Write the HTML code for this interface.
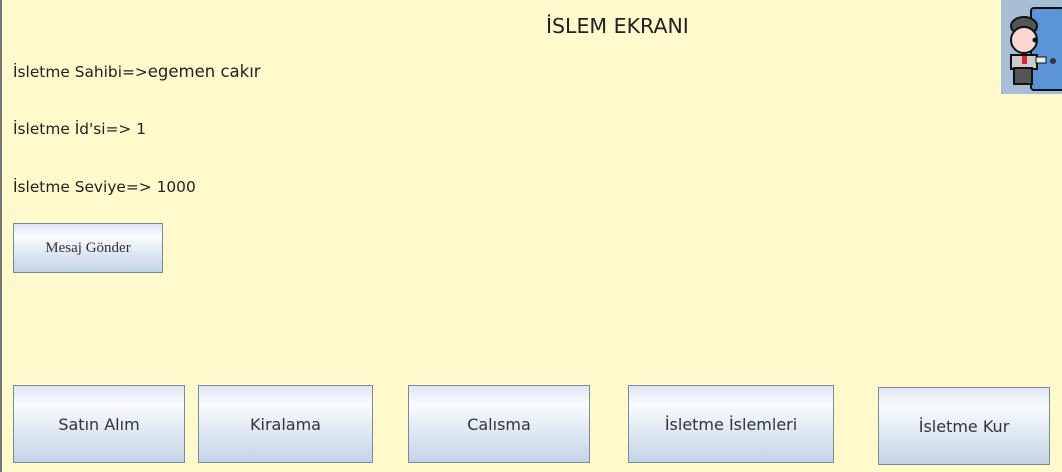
<!DOCTYPE html>
<html><head><meta charset="utf-8"><style>
body{margin:0;width:1062px;height:472px;background:#fff9cc;position:relative;overflow:hidden;font-family:"DejaVu Sans","Liberation Sans",sans-serif;color:#222}
.l{position:absolute;border-left:2px solid #777;left:0;top:0;height:472px}
.t{position:absolute;font-size:15.4px;left:13px}
.b{position:absolute;border:1px solid #7a8a99;background:linear-gradient(#dfe6f1 0%,#f9fbff 25%,#dfe8f3 60%,#c4d4e8 100%);display:flex;align-items:center;justify-content:center;font-size:16px;color:#333;box-sizing:border-box}
</style></head><body>
<div class="l"></div>
<div style="position:absolute;left:546px;top:14px;font-size:20.5px">İSLEM EKRANI</div>
<div class="t" style="top:62px">İsletme Sahibi=&gt;<span style="font-size:16.5px">egemen cakır</span></div>
<div class="t" style="top:120px">İsletme İd'si=&gt; 1</div>
<div class="t" style="top:178px">İsletme Seviye=&gt; 1000</div>
<div class="b" style="left:13px;top:223px;width:150px;height:50px;font-family:'Liberation Serif',serif;font-size:15px">Mesaj Gönder</div>
<div class="b" style="left:13px;top:385px;width:172px;height:78px">Satın Alım</div>
<div class="b" style="left:198px;top:385px;width:175px;height:78px">Kiralama</div>
<div class="b" style="left:408px;top:385px;width:182px;height:78px">Calısma</div>
<div class="b" style="left:628px;top:385px;width:206px;height:78px">İsletme İslemleri</div>
<div class="b" style="left:878px;top:387px;width:172px;height:78px">İsletme Kur</div>
<svg style="position:absolute;left:1001px;top:0" width="61" height="94" viewBox="0 0 61 94">
<rect width="61" height="94" fill="#a7bfd6"/>
<rect x="30" y="8" width="33" height="82" rx="3" fill="#5b95d8" stroke="#111" stroke-width="2"/>
<circle cx="52" cy="61" r="3" fill="#333"/>
<ellipse cx="23" cy="26" rx="13" ry="9" fill="#555" stroke="#111" stroke-width="2"/>
<circle cx="23" cy="40" r="13" fill="#fcd8d0" stroke="#111" stroke-width="2"/>
<circle cx="34" cy="40" r="2.5" fill="#111"/>
<rect x="10" y="55" width="26" height="14" fill="#ccc" stroke="#111" stroke-width="2"/>
<rect x="35" y="57" width="10" height="6" fill="#eee" stroke="#111"/>
<rect x="13" y="68" width="18" height="16" fill="#555" stroke="#111" stroke-width="2"/>
<rect x="21" y="56" width="5" height="8" fill="#d23"/>
</svg>
</body></html>
